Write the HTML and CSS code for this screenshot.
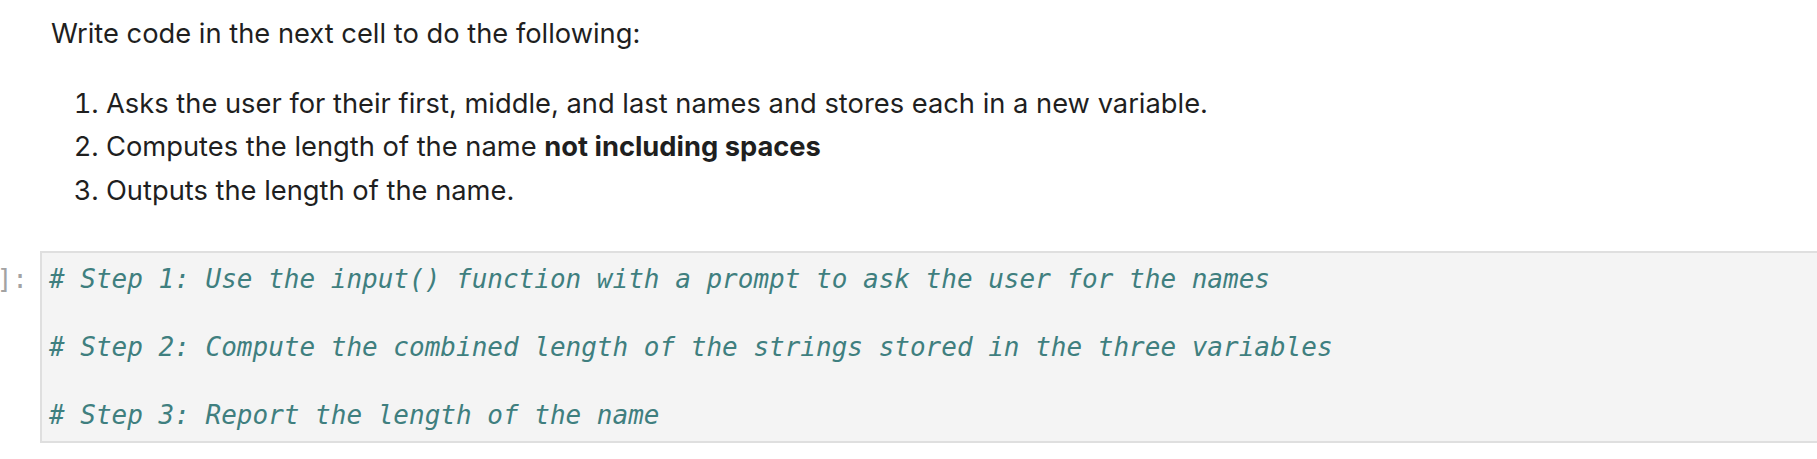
FILE: index.html
```html
<!DOCTYPE html>
<html>
<head>
<meta charset="utf-8">
<link rel="stylesheet" href="styles.css">
</head>
<body>
<div class="notebook">
  <div class="md-cell">
    <p class="md-p">Write code in the next cell to do the following:</p>
    <ol class="md-list">
      <li>Asks the user for their first, middle, and last names and stores each in a new variable.</li>
      <li>Computes the length of the name <strong>not including spaces</strong></li>
      <li>Outputs the length of the name.</li>
    </ol>
  </div>
  <div class="code-cell">
    <div class="prompt"><span class="prompt-text">In [ ]:</span></div>
    <div class="editor">
<pre class="code"><span class="cm"># Step 1: Use the input() function with a prompt to ask the user for the names</span>

<span class="cm"># Step 2: Compute the combined length of the strings stored in the three variables</span>

<span class="cm"># Step 3: Report the length of the name</span></pre>
    </div>
  </div>
</div>
</body>
</html>
```

FILE: styles.css
```css
html, body {
  margin: 0;
  padding: 0;
  background: #ffffff;
}

.notebook {
  display: flex;
  flex-direction: column;
  padding-top: 12px;
}

.md-cell {
  padding-left: 51px;
  font-family: Inter, "Noto Sans", sans-serif;
  font-size: 27.3px;
  line-height: 43.5px;
  color: #1f1f1f;
}

.md-p {
  margin: 0;
}

.md-list {
  margin: 26px 0 0 0;
  padding-left: 55px;
}

.md-list strong {
  font-weight: 700;
}

.code-cell {
  display: flex;
  margin-top: 39px;
}

.prompt {
  width: 28px;
  flex: 0 0 28px;
  padding-right: 12px;
  display: flex;
  justify-content: flex-end;
  overflow: hidden;
  padding-top: 11px;
  font-family: "DejaVu Sans Mono", monospace;
  font-size: 26px;
  line-height: 34px;
  color: #a3a3a3;
  white-space: nowrap;
}

.prompt-text {
  flex: none;
}

.editor {
  flex: 1 1 auto;
  background: #f4f4f4;
  border: 2px solid #dfdfdf;
  border-right: none;
  padding: 9px 0 9px 7px;
}

.code {
  margin: 0;
  font-family: "DejaVu Sans Mono", monospace;
  font-size: 26px;
  line-height: 34px;
  white-space: pre;
}

.cm {
  font-style: italic;
  color: #3f7f7f;
}
```
